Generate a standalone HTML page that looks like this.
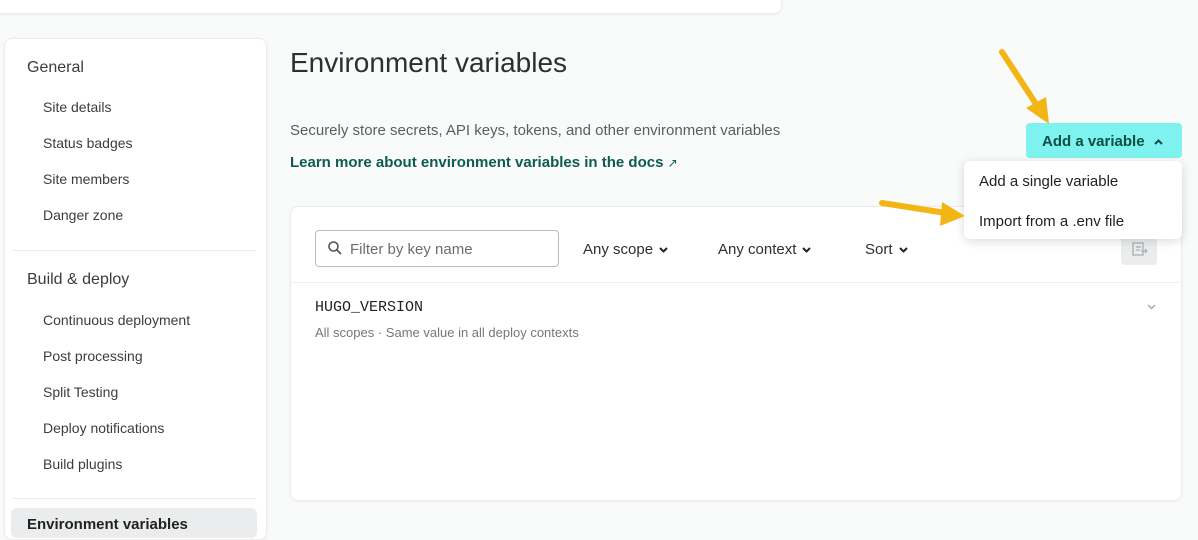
<!DOCTYPE html>
<html><head><style>
body{margin:0;width:1198px;height:527px;overflow:hidden;background:#f9fafa;font-family:"Liberation Sans",sans-serif;position:relative;color:#2c2f33}
.abs{position:absolute}
.card{background:#fff;border:1px solid #ececec;border-radius:8px;box-shadow:0 1px 3px rgba(0,0,0,.05)}
.side a{position:absolute;left:43px;font-size:14px;color:#3a3d40}
.side h{position:absolute;left:27px;font-size:16px;color:#3a3d40}
.dd{position:absolute;font-size:15px;color:#2c2f33}
.chev{display:inline-block;vertical-align:middle;margin-left:6px}
</style></head><body>
<div class="abs card" style="left:-10px;top:-10px;width:790px;height:22px"></div>
<div class="abs card side" style="left:4px;top:38px;width:261px;height:500px"></div>
<div class="side">
<h style="top:59px">General</h>
<a style="top:99px">Site details</a>
<a style="top:135px">Status badges</a>
<a style="top:171px">Site members</a>
<a style="top:207px">Danger zone</a>
<div class="abs" style="left:12px;top:250px;width:244px;height:1px;background:#ececec"></div>
<h style="top:271px">Build &amp; deploy</h>
<a style="top:312px">Continuous deployment</a>
<a style="top:348px">Post processing</a>
<a style="top:384px">Split Testing</a>
<a style="top:420px">Deploy notifications</a>
<a style="top:456px">Build plugins</a>
<div class="abs" style="left:12px;top:498px;width:244px;height:1px;background:#ececec"></div>
<div class="abs" style="left:11px;top:508px;width:246px;height:30px;background:#ebeced;border-radius:6px"></div>
<div class="abs" style="left:27px;top:516px;font-size:15px;font-weight:bold;color:#222">Environment variables</div>
</div>
<div class="abs" style="left:290px;top:47px;font-size:28px;color:#2c2f33">Environment variables</div>
<div class="abs" style="left:290px;top:122px;font-size:15px;color:#5a5e63">Securely store secrets, API keys, tokens, and other environment variables</div>
<div class="abs" style="left:290px;top:154px;font-size:15px;font-weight:bold;color:#0d5c4f">Learn more about environment variables in the docs <span style="font-weight:normal;font-size:12px">↗</span></div>
<div class="abs card" style="left:290px;top:206px;width:890px;height:293px"></div>
<div class="abs" style="left:291px;top:282px;width:889px;height:1px;background:#efefef"></div>
<div class="abs" style="left:315px;top:230px;width:242px;height:35px;border:1px solid #b9bcbf;border-radius:4px;background:#fff"></div>
<svg class="abs" style="left:327px;top:240px" width="16" height="16" viewBox="0 0 16 16"><circle cx="6.5" cy="6.5" r="4.5" fill="none" stroke="#555" stroke-width="1.6"/><path d="M10 10l4 4" stroke="#555" stroke-width="1.8"/></svg>
<div class="abs" style="left:350px;top:241px;font-size:15px;color:#6a6e73">Filter by key name</div>
<div class="dd" style="left:583px;top:241px">Any scope<svg class="chev" width="9" height="6"><path d="M1 1l3.5 3.5L8 1" fill="none" stroke="#222" stroke-width="2"/></svg></div>
<div class="dd" style="left:718px;top:241px">Any context<svg class="chev" width="9" height="6"><path d="M1 1l3.5 3.5L8 1" fill="none" stroke="#222" stroke-width="2"/></svg></div>
<div class="dd" style="left:865px;top:241px">Sort<svg class="chev" width="9" height="6"><path d="M1 1l3.5 3.5L8 1" fill="none" stroke="#222" stroke-width="2"/></svg></div>
<div class="abs" style="left:1121px;top:232px;width:36px;height:33px;background:#ebeced;border-radius:4px"></div>
<svg class="abs" style="left:1132px;top:242px" width="16" height="14"><rect x="1" y="1" width="10" height="12" fill="none" stroke="#b5b8bb" stroke-width="1.5"/><path d="M4 5h5M4 8h4M9 9h6M13 7l2 2-2 2" fill="none" stroke="#b5b8bb" stroke-width="1.5"/></svg>
<div class="abs" style="left:315px;top:299px;font-family:'Liberation Mono',monospace;font-size:15px;color:#222">HUGO_VERSION</div>
<div class="abs" style="left:315px;top:325px;font-size:13px;color:#777">All scopes · Same value in all deploy contexts</div>
<svg class="abs" style="left:1147px;top:304px" width="9" height="6"><path d="M1 1l3.5 3.5L8 1" fill="none" stroke="#aaa" stroke-width="1.5"/></svg>
<div class="abs" style="left:1026px;top:123px;width:156px;height:35px;background:#7ef2ee;border-radius:4px"></div>
<div class="abs" style="left:1042px;top:133px;font-size:15px;font-weight:bold;color:#0d4e45">Add a variable<svg class="chev" style="margin-left:9px" width="9" height="6"><path d="M1 5l3.5-3.5L8 5" fill="none" stroke="#0d4e45" stroke-width="2"/></svg></div>
<div class="abs" style="left:964px;top:161px;width:218px;height:78px;background:#fff;border-radius:6px;box-shadow:0 2px 10px rgba(0,0,0,.15)"></div>
<div class="abs" style="left:979px;top:173px;font-size:15px;color:#222">Add a single variable</div>
<div class="abs" style="left:979px;top:213px;font-size:15px;color:#222">Import from a .env file</div>
<svg class="abs" style="left:0;top:0" width="1198" height="527">
<path d="M1002 52L1036 104" stroke="#f2b514" stroke-width="6" stroke-linecap="round"/>
<path d="M1026 108L1049 124L1046 97Z" fill="#f2b514"/>
<path d="M882 203L946 213" stroke="#f2b514" stroke-width="6" stroke-linecap="round"/>
<path d="M942 202L965 216L940 226Z" fill="#f2b514"/>
</svg>
</body></html>
